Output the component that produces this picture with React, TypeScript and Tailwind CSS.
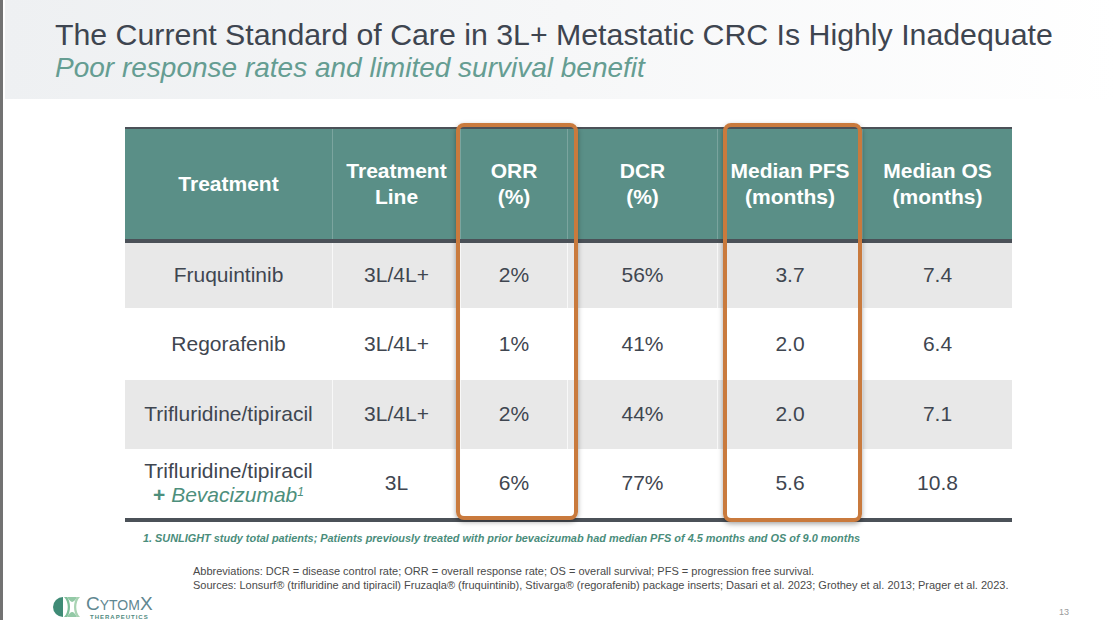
import React from "react";

const font = "font-['Liberation_Sans',Arial,sans-serif]";

const columns = [
  { key: "treatment", label: ["Treatment"], width: "w-[207px]" },
  { key: "line", label: ["Treatment", "Line"], width: "w-[128px]" },
  { key: "orr", label: ["ORR", "(%)"], width: "w-[107px]" },
  { key: "dcr", label: ["DCR", "(%)"], width: "w-[150px]" },
  { key: "pfs", label: ["Median PFS", "(months)"], width: "w-[145px]" },
  { key: "os", label: ["Median OS", "(months)"], width: "w-[150px]" },
];

const rows = [
  { treatment: "Fruquintinib", line: "3L/4L+", orr: "2%", dcr: "56%", pfs: "3.7", os: "7.4", h: "h-[65px]", shaded: true },
  { treatment: "Regorafenib", line: "3L/4L+", orr: "1%", dcr: "41%", pfs: "2.0", os: "6.4", h: "h-[72px]", shaded: false },
  { treatment: "Trifluridine/tipiracil", line: "3L/4L+", orr: "2%", dcr: "44%", pfs: "2.0", os: "7.1", h: "h-[69px]", shaded: true },
  { treatment: "combo", line: "3L", orr: "6%", dcr: "77%", pfs: "5.6", os: "10.8", h: "h-[69px]", shaded: false },
];

function Logo() {
  return (
    <div className="flex items-center gap-[4px]">
      <svg width="30" height="22" viewBox="0 0 30 22">
        <path d="M11 1 A10 10 0 0 0 11 21 Z" fill="#3f8b76" />
        <path d="M12 1 C17 6 17 16 12 21 L15 21 C19 16 19 6 15 1 Z" fill="#7fbf9a" />
        <path d="M28 1 C23 6 23 16 28 21 L25 21 C21 16 21 6 25 1 Z" fill="#a9d3b3" />
        <path d="M15 1 C19 7 21 8 25 1 Z M15 21 C19 15 21 14 25 21 Z" fill="#93c9a6" />
      </svg>
      <div className="flex flex-col items-center leading-none">
        <div className={`${font} text-[#5f8791]`}>
          <span className="text-[19px]">C</span>
          <span className="text-[14px]">YTOM</span>
          <span className="text-[19px]">X</span>
        </div>
        <div className={`${font} text-[6px] font-bold text-[#4f8a80] tracking-[1px] mt-[1px]`}>
          THERAPEUTICS
        </div>
      </div>
    </div>
  );
}

export default function App() {
  return (
    <div className={`${font} w-[1118px] h-[620px] bg-white flex overflow-hidden`}>
      <div className="w-[3px] bg-[#727272] shrink-0" />
      <div className="flex-1 flex flex-col">
        {/* title band */}
        <div className="h-[100px] ml-[2px] bg-gradient-to-r from-[#eef0f2] via-[#f6f7f8] to-white pl-[50px] pt-[18px]">
          <h1 className="text-[30.3px] leading-[34px] text-[#3e4550]">
            The Current Standard of Care in 3L+ Metastatic CRC Is Highly Inadequate
          </h1>
          <p className="text-[28px] leading-[32px] italic text-[#659d92]">
            Poor response rates and limited survival benefit
          </p>
        </div>

        {/* table */}
        <div className="relative ml-[122px] mt-[28px] w-[887px]">
          <div className="border-t-[2px] border-[#4b5158]">
            <div className="flex h-[114px] bg-[#5a8f87] border-b-[4px] border-[#4b5158]">
              {columns.map((c, i) => (
                <div
                  key={c.key}
                  className={`${c.width} flex flex-col items-center justify-center text-white font-bold text-[21px] leading-[26px] ${i > 0 ? "border-l border-white/20" : ""}`}
                >
                  {c.label.map((l) => (
                    <span key={l}>{l}</span>
                  ))}
                </div>
              ))}
            </div>
            {rows.map((r, ri) => (
              <div key={ri} className={`flex ${r.h} ${r.shaded ? "bg-[#e8e8e8]" : "bg-white"}`}>
                {columns.map((c, i) => (
                  <div
                    key={c.key}
                    className={`${c.width} flex flex-col items-center justify-center text-[21px] leading-[24px] text-[#3f4650] ${i > 0 ? "border-l border-white/70" : ""}`}
                  >
                    {c.key === "treatment" && r.treatment === "combo" ? (
                      <>
                        <span>Trifluridine/tipiracil</span>
                        <span className="text-[#4d8f7c]">
                          <b className="not-italic">+</b>{" "}
                          <i>Bevacizumab</i>
                          <sup className="italic text-[12px]">1</sup>
                        </span>
                      </>
                    ) : (
                      <span>{(r as Record<string, any>)[c.key]}</span>
                    )}
                  </div>
                ))}
              </div>
            ))}
            <div className="h-[4px] bg-[#4b5158]" />
          </div>

          {/* highlight boxes */}
          <div className="absolute left-[331px] top-[-4px] w-[122px] h-[397px] rounded-[8px] border-[4px] border-[#c97a3d] shadow-[0_2px_5px_rgba(0,0,0,0.35)]" />
          <div className="absolute left-[598px] top-[-4px] w-[139px] h-[399px] rounded-[8px] border-[4px] border-[#c97a3d] shadow-[0_2px_5px_rgba(0,0,0,0.35)]" />
        </div>

        <p className="ml-[140px] mt-[8px] text-[10.9px] font-bold italic text-[#4a8d7b]">
          1. SUNLIGHT study total patients; Patients previously treated with prior bevacizumab had median PFS of 4.5 months and OS of 9.0 months
        </p>

        <div className="ml-[190px] mt-[18px] text-[11px] leading-[14px] text-[#4a4a4a]">
          <p>Abbreviations: DCR = disease control rate; ORR = overall response rate; OS = overall survival; PFS = progression free survival.</p>
          <p>
            Sources: Lonsurf® (trifluridine and tipiracil) Fruzaqla® (fruquintinib), Stivarga® (regorafenib) package inserts; Dasari et al. 2023; Grothey et al. 2013; Prager et al. 2023.
          </p>
        </div>

        <div className="flex items-end justify-between ml-[49px] mr-[49px] mt-[2px]">
          <Logo />
          <span className="text-[9px] text-[#9a9a9a] mb-[1px]">13</span>
        </div>
      </div>
    </div>
  );
}
